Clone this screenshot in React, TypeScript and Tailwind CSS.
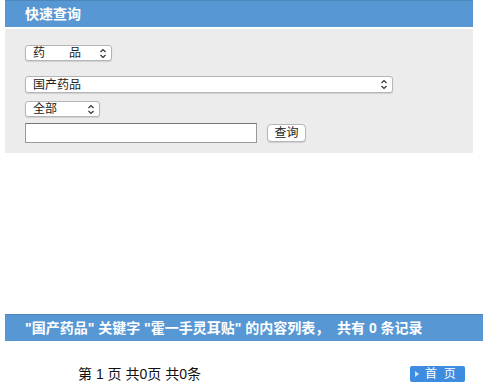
import React from 'react';

const font = { fontFamily: '"Liberation Sans", "Noto Sans CJK SC", sans-serif' };

const Chevron: React.FC = () => (
  <svg width="8" height="11" viewBox="0 0 8 11" className="shrink-0">
    <path d="M1.5 4 L4 1.5 L6.5 4" fill="none" stroke="#333" strokeWidth="1.2" />
    <path d="M1.5 7 L4 9.5 L6.5 7" fill="none" stroke="#333" strokeWidth="1.2" />
  </svg>
);

const FakeSelect: React.FC<{ label: string; className: string }> = ({ label, className }) => (
  <div
    className={`flex items-center justify-between bg-white border border-[#b5b5b5] rounded-[3px] shadow-[0_1px_1px_rgba(0,0,0,0.12)] pl-[7px] pr-[4px] text-[12px] text-[#222] leading-none ${className}`}
  >
    <span className="whitespace-pre">{label}</span>
    <Chevron />
  </div>
);

export default function App() {
  return (
    <div className="w-[483px] h-[382px] bg-white overflow-hidden" style={font}>
      <div className="ml-[5px] w-[468px]">
        <div className="h-[27px] bg-[#5797d3] border-t border-[#4b86bd] flex items-center pl-[20px]">
          <span className="text-white font-bold text-[14px]">快速查询</span>
        </div>
        <div className="mt-[2px] h-[124px] bg-[#ececec] pl-[20px] pt-[16px] flex flex-col">
          <FakeSelect label={'药　　品'} className="w-[87px] h-[16px]" />
          <FakeSelect label="国产药品" className="w-[368px] h-[17px] mt-[15px]" />
          <FakeSelect label="全部" className="w-[75px] h-[16px] mt-[8px]" />
          <div className="flex items-center mt-[6px]">
            <div className="w-[232px] h-[20px] bg-white border border-[#999] border-t-[#777]" />
            <div className="ml-[10px] w-[39px] h-[18px] bg-white border border-[#b5b5b5] rounded-[4px] shadow-[0_1px_1px_rgba(0,0,0,0.12)] flex items-center justify-center text-[12px] text-[#222]">
              查询
            </div>
          </div>
        </div>
      </div>
      <div className="mt-[161px] ml-[5px] h-[27px] bg-[#5797d3] border-t border-[#4b86bd] flex items-center pl-[20px]">
        <span className="text-white font-bold text-[14px] whitespace-pre">
          "国产药品" 关键字 "霍一手灵耳贴" 的内容列表，  共有 0 条记录
        </span>
      </div>
      <div className="flex items-center mt-[25px] h-[16px]">
        <span className="ml-[78px] text-[14px] text-[#111] whitespace-pre">第 1 页 共0页 共0条</span>
        <div className="ml-auto mr-[18px] w-[55px] h-[16px] bg-[#3d8ce0] rounded-[2px] flex items-center pl-[5px] gap-[6px]">
          <svg width="4" height="6" viewBox="0 0 4 6">
            <path d="M0 0 L4 3 L0 6 Z" fill="#cfe4fb" />
          </svg>
          <span className="text-white text-[12px] leading-none whitespace-pre">首  页</span>
        </div>
      </div>
    </div>
  );
}
